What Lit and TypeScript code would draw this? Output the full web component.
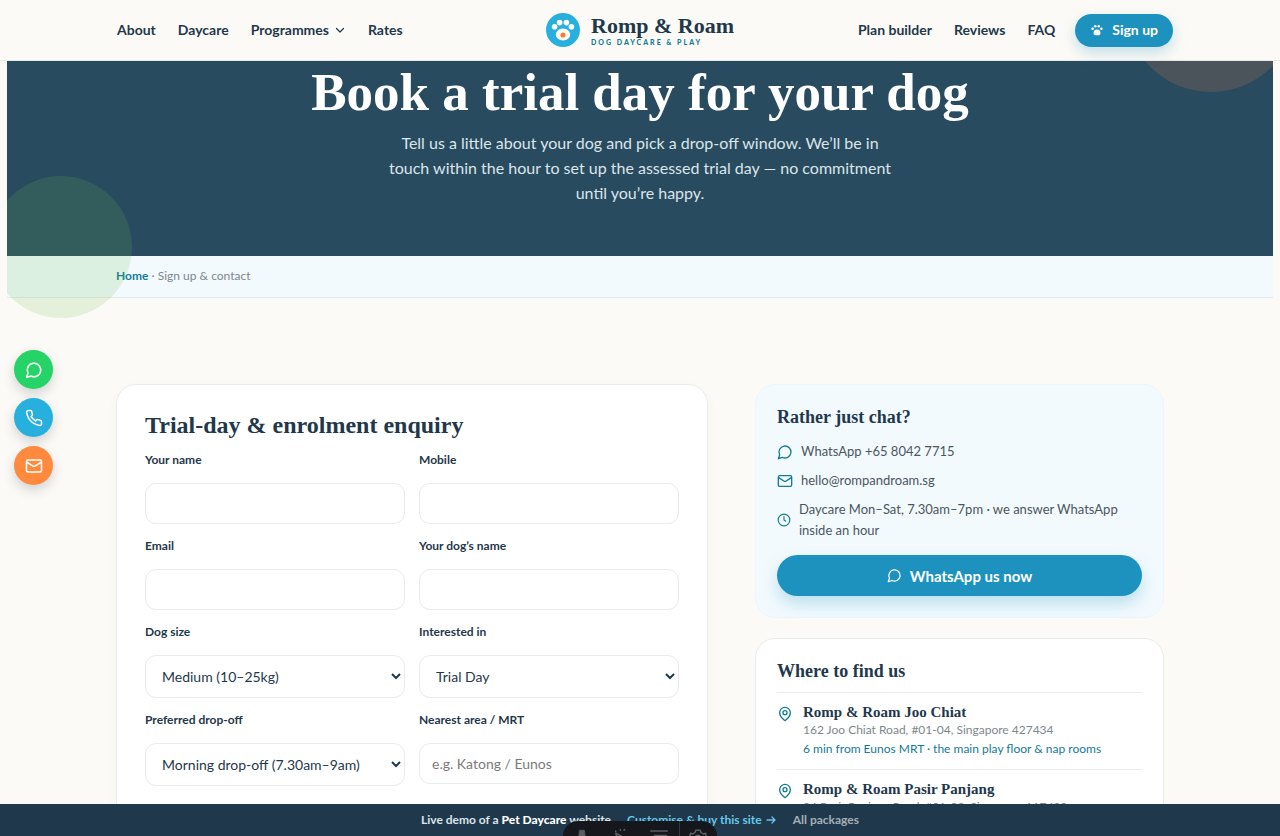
import { LitElement, html, css, svg, nothing } from "lit";
import { customElement, property } from "lit/decorators.js";

const shapes: Record<string, unknown> = {
  chat: svg`<path d="M7.9 20A9 9 0 1 0 4 16.1L2 22Z"/>`,
  phone: svg`<path d="M22 16.92v3a2 2 0 0 1-2.18 2 19.79 19.79 0 0 1-8.63-3.07 19.5 19.5 0 0 1-6-6 19.79 19.79 0 0 1-3.07-8.67A2 2 0 0 1 4.11 2h3a2 2 0 0 1 2 1.72 12.84 12.84 0 0 0 .7 2.81 2 2 0 0 1-.45 2.11L8.09 9.91a16 16 0 0 0 6 6l1.27-1.27a2 2 0 0 1 2.11-.45 12.84 12.84 0 0 0 2.81.7A2 2 0 0 1 22 16.92z"/>`,
  mail: svg`<rect x="2" y="4" width="20" height="16" rx="2"/><path d="m2.5 7 8.4 5.3a2 2 0 0 0 2.2 0L21.5 7"/>`,
  clock: svg`<circle cx="12" cy="12" r="10"/><path d="M12 6v6l3 2"/>`,
  pin: svg`<path d="M20 10c0 6-8 12-8 12s-8-6-8-12a8 8 0 0 1 16 0Z"/><circle cx="12" cy="10" r="3"/>`,
  chevron: svg`<path d="m5 9 7 7 7-7"/>`,
  arrow: svg`<path d="M4 12h16M14 6l6 6-6 6"/>`,
  paw: svg`<g fill="currentColor" stroke="none"><circle cx="4.500" cy="10" r="2.200"/><circle cx="9" cy="5.500" r="2.200"/><circle cx="15" cy="5.500" r="2.200"/><circle cx="19.500" cy="10" r="2.200"/><path d="M12 11c-4 0-6 3-6 6 0 2.500 2 4 4 4h4c2 0 4-1.500 4-4 0-3-2-6-6-6z"/></g>`,
  person: svg`<path fill="currentColor" d="M9 3h6l1 6 3 13h-5v-6h-4v6H5L8 9z" stroke-width="1"/>`,
  pointer: svg`<path d="m5 7 15 8-7 2-3 6zM5 4v.5M11 2v1M17 2l-1 1"/>`,
  lines: svg`<path d="M1 4h22M6 10h16M1 18h22"/>`,
  gear: svg`<circle cx="12" cy="13" r="3.500"/><path d="M9 3h6l1 3 3 2 3-1 1 5-2 2v4l-4 4H7l-4-4v-4l-2-2 1-5 3 1 3-2z"/>`,
};

@customElement("ui-icon")
class UiIcon extends LitElement {
  @property() name = "";
  @property({ type: Number }) size = 16;
  @property({ type: Number }) weight = 2;

  static styles = css`
    :host { display: inline-flex; flex: none; }
    svg { display: block; fill: none; stroke: currentColor; stroke-linecap: round; stroke-linejoin: round; }
  `;

  render() {
    return html`<svg viewBox="0 0 24 24" width=${this.size} height=${this.size} stroke-width=${this.weight} aria-hidden="true">${shapes[this.name]}</svg>`;
  }
}

interface Field {
  id: string;
  label: string;
  type?: string;
  placeholder?: string;
  options?: string[];
}

const fields: Field[] = [
  { id: "name", label: "Your name", type: "text" },
  { id: "mobile", label: "Mobile", type: "tel" },
  { id: "email", label: "Email", type: "email" },
  { id: "dog", label: "Your dog’s name", type: "text" },
  { id: "size", label: "Dog size", options: ["Medium (10–25kg)"] },
  { id: "interest", label: "Interested in", options: ["Trial Day"] },
  { id: "window", label: "Preferred drop-off", options: ["Morning drop-off (7.30am–9am)"] },
  { id: "area", label: "Nearest area / MRT", type: "text", placeholder: "e.g. Katong / Eunos" },
];

const branches = [
  { name: "Romp & Roam Joo Chiat", address: "162 Joo Chiat Road, #01-04, Singapore 427434", note: "6 min from Eunos MRT · the main play floor & nap rooms" },
  { name: "Romp & Roam Pasir Panjang", address: "24 Pasir Panjang Road, #01-08, Singapore 117420", note: "" },
];

@customElement("app-root")
class AppRoot extends LitElement {
  static styles = css`
    :host {
      --ink: #1f384c;
      --teal: #147a96;
      --blue: #1e92be;
      --line: #e9ecec;
      --serif: "Liberation Serif", serif;
      display: block;
      background: #fcfaf6;
      color: #4a5660;
      font: 14px/20px Lato, sans-serif;
    }
    * { box-sizing: border-box; }
    h1, h2, h3, p, ul { margin: 0; padding: 0; }
    h1, h2, h3 { font-family: var(--serif); font-weight: 700; color: var(--ink); }
    a { color: inherit; text-decoration: none; }

    .top { position: sticky; top: 0; z-index: 3; background: #fcfaf6; border-bottom: 1px solid #e8e8e4; }
    .bar { max-width: 1066px; height: 60px; margin: 0 auto; display: grid; grid-template-columns: 1fr auto 1fr; align-items: center; }
    .nav { display: flex; align-items: center; gap: 2px; font-weight: 700; color: var(--ink); }
    .nav.end { justify-content: flex-end; }
    .nav a { display: flex; align-items: center; gap: 5px; padding: 6px 10px; white-space: nowrap; }
    .nav .signup { margin-left: 8px; height: 33px; padding: 0 15px; gap: 8px; border-radius: 17px; background: var(--blue); color: #fff; box-shadow: 0 6px 14px #1e92be40; }
    .brand { display: flex; align-items: center; gap: 11px; }
    .brand svg { display: block; }
    .words { display: grid; }
    .brandname { font: 700 22px/24px var(--serif); color: var(--ink); }
    .tagline { font-size: 7px; line-height: 9px; font-weight: 900; letter-spacing: 2px; color: var(--teal); }

    .page { margin: 0 7px; overflow-x: clip; }
    .hero { position: relative; background: #284b60; color: #dbe5ea; padding: 0 24px 51px; text-align: center; }
    .hero h1 { font-size: 53px; line-height: 62px; color: #fff; }
    .hero p { max-width: 510px; margin: 7px auto 0; font-size: 16px; line-height: 25px; }
    .blob { position: absolute; border-radius: 50%; pointer-events: none; }
    .warm { width: 172px; height: 172px; right: -24px; top: -141px; background: #ff8a3d; opacity: .16; }
    .fresh { width: 142px; height: 142px; left: -17px; bottom: -62px; z-index: 1; background: #6cc24a; opacity: .16; }
    .crumbs { background: #f2fafe; border-bottom: 1px solid #e0e9ec; }
    .crumbs nav, .cols { max-width: 1048px; margin: 0 auto; }
    .crumbs nav { padding: 10px 0 11px; font-size: 12px; color: #7d878d; }
    .crumbs a { font-weight: 700; color: var(--teal); }

    .cols { padding: 86px 0 80px; display: grid; grid-template-columns: 592fr 409fr; gap: 47px; align-items: start; }
    .card { background: #fff; border: 1px solid var(--line); border-radius: 20px; }
    .form { padding: 26px 28px 28px; box-shadow: 0 4px 12px #1f384c08; }
    .form h2 { font-size: 24px; line-height: 28px; margin-bottom: 12px; }
    .fields { display: grid; grid-template-columns: 1fr 1fr; gap: 13px 14px; align-items: start; }
    .field { display: grid; gap: 15px; min-width: 0; }
    .wide { grid-column: 1 / -1; padding-top: 2px; }
    .field label { font-size: 12px; line-height: 17px; font-weight: 700; color: var(--ink); }
    input, select, textarea { width: 100%; font: 14px/20px Lato, sans-serif; color: var(--ink); background: #fff; border: 1px solid var(--line); border-radius: 11px; padding: 0 12px; }
    input { height: 41px; }
    select { height: 43px; }
    textarea { height: 90px; }
    input::placeholder { color: #7a7a7a; }

    .side { display: grid; gap: 20px; }
    .side .card { padding: 21px; }
    .side h3 { font-size: 18px; line-height: 22px; }
    .side .chat { background: #f2fafe; border-color: #ecf7fb; }
    .ways { list-style: none; margin: 13px 0 14px; display: grid; gap: 8px; font-size: 13px; line-height: 21px; }
    .ways li { display: flex; align-items: center; gap: 8px; }
    .ways ui-icon, .branch ui-icon { color: var(--teal); }
    .cta { display: flex; align-items: center; justify-content: center; gap: 8px; height: 41px; border-radius: 21px; background: var(--blue); color: #fff; font-size: 15px; font-weight: 700; box-shadow: 0 8px 16px #1e92be40; }
    .branch { display: flex; gap: 10px; padding: 11px 0 12px; border-top: 1px solid var(--line); }
    .branch:first-of-type { margin-top: 10px; }
    .branch ui-icon { margin-top: 2px; }
    .branch h4 { margin: 0; font: 700 15px/17px var(--serif); color: var(--ink); }
    .branch p { font-size: 12px; line-height: 17px; color: #7d878d; }
    .branch .note { margin-top: 2px; color: var(--teal); }

    .quick { position: fixed; left: 14px; top: 350px; z-index: 4; display: grid; gap: 9px; }
    .quick a { display: grid; place-items: center; width: 39px; height: 39px; border-radius: 50%; color: #fff; box-shadow: 0 5px 12px #1f384c33; }
    .green { background: #25d366; }
    .sky { background: #27b0de; }
    .orange { background: #ff8a3d; }

    .demo { position: fixed; inset: auto 0 0 0; z-index: 5; height: 32px; display: flex; align-items: center; justify-content: center; gap: 16px; background: #1f384c; color: #dbe5ea; font-size: 12px; font-weight: 700; }
    .demo b { color: #fff; }
    .demo .buy { display: flex; align-items: center; gap: 3px; color: #67c9ea; }
    .demo .all { color: #a5afb7; }
    .tools { position: fixed; left: 50%; bottom: 0; z-index: 6; transform: translateX(-50%); width: 154px; height: 15px; overflow: hidden; display: grid; grid-template-columns: repeat(4, 1fr); justify-items: center; background: #15171c; border-radius: 15px 15px 0 0; }
    .tools button { padding: 7px 0 0; border: 0; width: 100%; background: none; color: #5c5e62; display: flex; justify-content: center; }
    .tools button:last-child { border-left: 1px solid #34363b; }
  `;

  private control(f: Field) {
    return f.options
      ? html`<select id=${f.id}>${f.options.map((o) => html`<option>${o}</option>`)}</select>`
      : html`<input id=${f.id} type=${f.type ?? "text"} placeholder=${f.placeholder ?? nothing}>`;
  }

  render() {
    return html`
      <header class="top">
        <div class="bar">
          <nav class="nav" aria-label="Main">
            <a href="#about">About</a>
            <a href="#daycare">Daycare</a>
            <a href="#programmes">Programmes <ui-icon name="chevron" size="12" weight="2.4"></ui-icon></a>
            <a href="#rates">Rates</a>
          </nav>
          <a class="brand" href="#home">
            <svg width="34" height="34" viewBox="0 0 34 34" aria-hidden="true">
              <circle cx="17" cy="17" r="17" fill="#27b0de"/>
              <g fill="#fff">
                <circle cx="8.600" cy="13.800" r="2.800"/><circle cx="13.600" cy="9.600" r="2.800"/>
                <circle cx="20.400" cy="9.600" r="2.800"/><circle cx="25.400" cy="13.800" r="2.800"/>
                <ellipse cx="17" cy="21.600" rx="7.200" ry="6"/>
              </g>
              <circle cx="17" cy="22" r="2.600" fill="#ff7a33"/>
            </svg>
            <span class="words">
              <span class="brandname">Romp &amp; Roam</span>
              <span class="tagline">DOG DAYCARE &amp; PLAY</span>
            </span>
          </a>
          <nav class="nav end" aria-label="More">
            <a href="#plan">Plan builder</a>
            <a href="#reviews">Reviews</a>
            <a href="#faq">FAQ</a>
            <a class="signup" href="#signup"><ui-icon name="paw" size="14"></ui-icon>Sign up</a>
          </nav>
        </div>
      </header>

      <main class="page">
        <section class="hero">
          <span class="blob warm"></span>
          <span class="blob fresh"></span>
          <h1>Book a trial day for your dog</h1>
          <p>Tell us a little about your dog and pick a drop-off window. We’ll be in touch within the hour to set up the assessed trial day — no commitment until you’re happy.</p>
        </section>
        <div class="crumbs"><nav aria-label="Breadcrumb"><a href="#home">Home</a> · Sign up &amp; contact</nav></div>

        <div class="cols">
          <form class="card form">
            <h2>Trial-day &amp; enrolment enquiry</h2>
            <div class="fields">
              ${fields.map((f) => html`<div class="field"><label for=${f.id}>${f.label}</label>${this.control(f)}</div>`)}
              <div class="field wide"><label for="notes">Tell us about your dog</label><textarea id="notes"></textarea></div>
            </div>
          </form>

          <aside class="side">
            <section class="card chat">
              <h3>Rather just chat?</h3>
              <ul class="ways">
                <li><ui-icon name="chat" size="16"></ui-icon><a href="#whatsapp">WhatsApp +65 8042 7715</a></li>
                <li><ui-icon name="mail" size="16"></ui-icon><a href="#mail">hello@rompandroam.sg</a></li>
                <li><ui-icon name="clock" size="14"></ui-icon><span>Daycare Mon–Sat, 7.30am–7pm · we answer WhatsApp inside an hour</span></li>
              </ul>
              <a class="cta" href="#whatsapp"><ui-icon name="chat" size="15"></ui-icon>WhatsApp us now</a>
            </section>
            <section class="card">
              <h3>Where to find us</h3>
              ${branches.map((b) => html`
                <div class="branch">
                  <ui-icon name="pin" size="16"></ui-icon>
                  <div><h4>${b.name}</h4><p>${b.address}</p>${b.note ? html`<p class="note">${b.note}</p>` : nothing}</div>
                </div>`)}
            </section>
          </aside>
        </div>
      </main>

      <nav class="quick" aria-label="Quick contact">
        <a class="green" href="#whatsapp" aria-label="WhatsApp"><ui-icon name="chat" size="18"></ui-icon></a>
        <a class="sky" href="#call" aria-label="Call"><ui-icon name="phone" size="18"></ui-icon></a>
        <a class="orange" href="#mail" aria-label="Email"><ui-icon name="mail" size="18"></ui-icon></a>
      </nav>

      <footer class="demo">
        <span>Live demo of a <b>Pet Daycare</b> website</span>
        <a class="buy" href="#buy">Customise &amp; buy this site <ui-icon name="arrow" size="12" weight="2.600"></ui-icon></a>
        <a class="all" href="#packages">All packages</a>
      </footer>
      <div class="tools" role="toolbar">
        <button aria-label="Profile"><ui-icon name="person" size="18"></ui-icon></button>
        <button aria-label="Select"><ui-icon name="pointer" size="18"></ui-icon></button>
        <button aria-label="List"><ui-icon name="lines" size="18"></ui-icon></button>
        <button aria-label="Settings"><ui-icon name="gear" size="18"></ui-icon></button>
      </div>
    `;
  }
}
